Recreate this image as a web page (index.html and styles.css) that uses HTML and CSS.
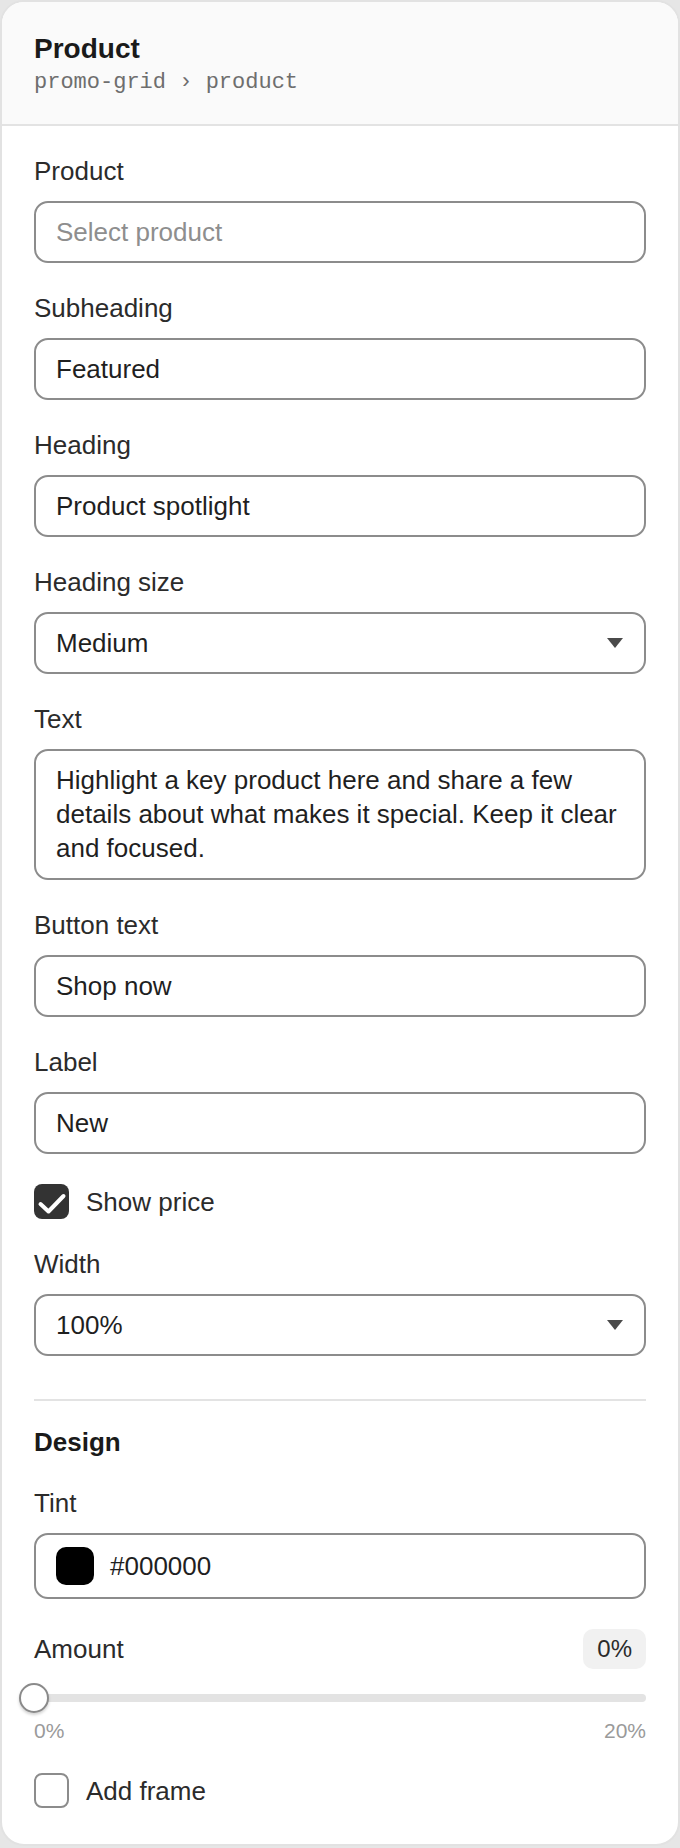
FILE: index.html
```html
<!DOCTYPE html>
<html lang="en">
<head>
<meta charset="utf-8">
<title>Product</title>
<link rel="stylesheet" href="styles.css">
</head>
<body>
<div class="card">
  <header class="head">
    <h1 class="title">Product</h1>
    <div class="crumb">promo-grid › product</div>
  </header>
  <div class="body">
    <div class="fields">
      <div class="field">
        <label class="label">Product</label>
        <input class="input" type="text" placeholder="Select product">
      </div>
      <div class="field">
        <label class="label">Subheading</label>
        <input class="input" type="text" value="Featured">
      </div>
      <div class="field">
        <label class="label">Heading</label>
        <input class="input" type="text" value="Product spotlight">
      </div>
      <div class="field">
        <label class="label">Heading size</label>
        <div class="input select"><span>Medium</span><svg class="caret" viewBox="0 0 16 10" width="16" height="10"><path d="M0 0H16L8 10Z"/></svg></div>
      </div>
      <div class="field">
        <label class="label">Text</label>
        <textarea class="input textarea" rows="3">Highlight a key product here and share a few details about what makes it special. Keep it clear and focused.</textarea>
      </div>
      <div class="field">
        <label class="label">Button text</label>
        <input class="input" type="text" value="Shop now">
      </div>
      <div class="field">
        <label class="label">Label</label>
        <input class="input" type="text" value="New">
      </div>
      <div class="check-row">
        <span class="box checked"><svg viewBox="0 0 35 35" width="35" height="35"><polyline points="6.5,20 14.5,27.5 29.5,12" fill="none" stroke="#fff" stroke-width="4" stroke-linecap="round" stroke-linejoin="round"/></svg></span>
        <span class="check-text">Show price</span>
      </div>
      <div class="field">
        <label class="label">Width</label>
        <div class="input select"><span>100%</span><svg class="caret" viewBox="0 0 16 10" width="16" height="10"><path d="M0 0H16L8 10Z"/></svg></div>
      </div>
    </div>
    <section class="design">
      <h2 class="section-title">Design</h2>
      <div class="field">
        <label class="label">Tint</label>
        <div class="input color-input"><span class="swatch"></span><span>#000000</span></div>
      </div>
      <div class="range-field">
        <div class="range-head"><span class="label">Amount</span><span class="badge">0%</span></div>
        <div class="slider"><div class="track"></div><span class="thumb"></span></div>
        <div class="scale"><span>0%</span><span>20%</span></div>
      </div>
      <div class="check-row">
        <span class="box"></span>
        <span class="check-text">Add frame</span>
      </div>
    </section>
  </div>
</div>
</body>
</html>
```
FILE: styles.css
```css
html, body {
  margin: 0;
  background: #e6e6e6;
}
body {
  font-family: "Liberation Sans", Arial, sans-serif;
  color: #222;
}
* { box-sizing: border-box; }

.card {
  background: #fff;
  border: 2px solid #e2e2e2;
  border-radius: 24px;
  overflow: hidden;
}

.head {
  background: #fafafa;
  padding: 29px 32px 26px;
  border-bottom: 2px solid #e3e3e3;
}
.title {
  margin: 0;
  font-size: 28px;
  line-height: 35px;
  font-weight: 700;
  color: #1a1a1a;
}
.crumb {
  margin-top: 2px;
  font-family: "Liberation Mono", "Courier New", monospace;
  font-size: 22px;
  line-height: 30px;
  color: #6e6e6e;
}

.body {
  padding: 30px 32px 36px;
}
.fields, .design {
  display: flex;
  flex-direction: column;
  gap: 30px;
}
.field {
  display: flex;
  flex-direction: column;
  gap: 15px;
}
.label {
  font-size: 26px;
  line-height: 30px;
  color: #2b2b2b;
}
.input {
  display: block;
  width: 100%;
  height: 62px;
  margin: 0;
  padding: 0 20px;
  border: 2px solid #8c8c8c;
  border-radius: 14px;
  background: #fff;
  font-family: "Liberation Sans", Arial, sans-serif;
  font-size: 26px;
  color: #1f1f1f;
  outline: none;
}
.input::placeholder {
  color: #8e8e8e;
  opacity: 1;
}
.textarea {
  height: 131px;
  padding: 12px 20px 13px;
  line-height: 34px;
  resize: none;
  overflow: hidden;
}
.select {
  display: flex;
  align-items: center;
  justify-content: space-between;
}
.caret {
  fill: #4a4a4a;
  margin-right: 1px;
}

.check-row {
  display: flex;
  align-items: center;
  gap: 17px;
}
.box {
  width: 35px;
  height: 35px;
  border: 2px solid #8c8c8c;
  border-radius: 8px;
  background: #fff;
  flex: none;
}
.box.checked {
  border: none;
  background: #333;
  display: flex;
}
.check-text {
  font-size: 26px;
  line-height: 30px;
  color: #2b2b2b;
}

.design {
  margin-top: 43px;
  border-top: 2px solid #e3e3e3;
  padding-top: 25px;
}
.section-title {
  margin: 0;
  font-size: 26px;
  line-height: 32px;
  font-weight: 700;
  color: #1a1a1a;
}
.color-input {
  height: 66px;
  display: flex;
  align-items: center;
  gap: 16px;
}
.swatch {
  width: 38px;
  height: 38px;
  border-radius: 10px;
  background: #000;
  flex: none;
}

.range-field {
  display: flex;
  flex-direction: column;
}
.range-head {
  display: flex;
  align-items: center;
  justify-content: space-between;
  height: 40px;
}
.badge {
  height: 40px;
  padding: 0 14px;
  border-radius: 10px;
  background: #f1f1f1;
  font-size: 24px;
  line-height: 40px;
  color: #2b2b2b;
}
.slider {
  position: relative;
  height: 30px;
  margin-top: 14px;
  display: flex;
  align-items: center;
}
.track {
  width: 100%;
  height: 8px;
  border-radius: 4px;
  background: #e3e3e3;
}
.thumb {
  position: absolute;
  left: -15px;
  top: 0;
  width: 30px;
  height: 30px;
  border-radius: 50%;
  border: 2px solid #8a8a8a;
  background: #fff;
  box-shadow: 0 2px 3px rgba(0, 0, 0, 0.18);
}
.scale {
  margin-top: 6px;
  display: flex;
  justify-content: space-between;
  font-size: 21px;
  line-height: 24px;
  color: #9a9a9a;
}
```
